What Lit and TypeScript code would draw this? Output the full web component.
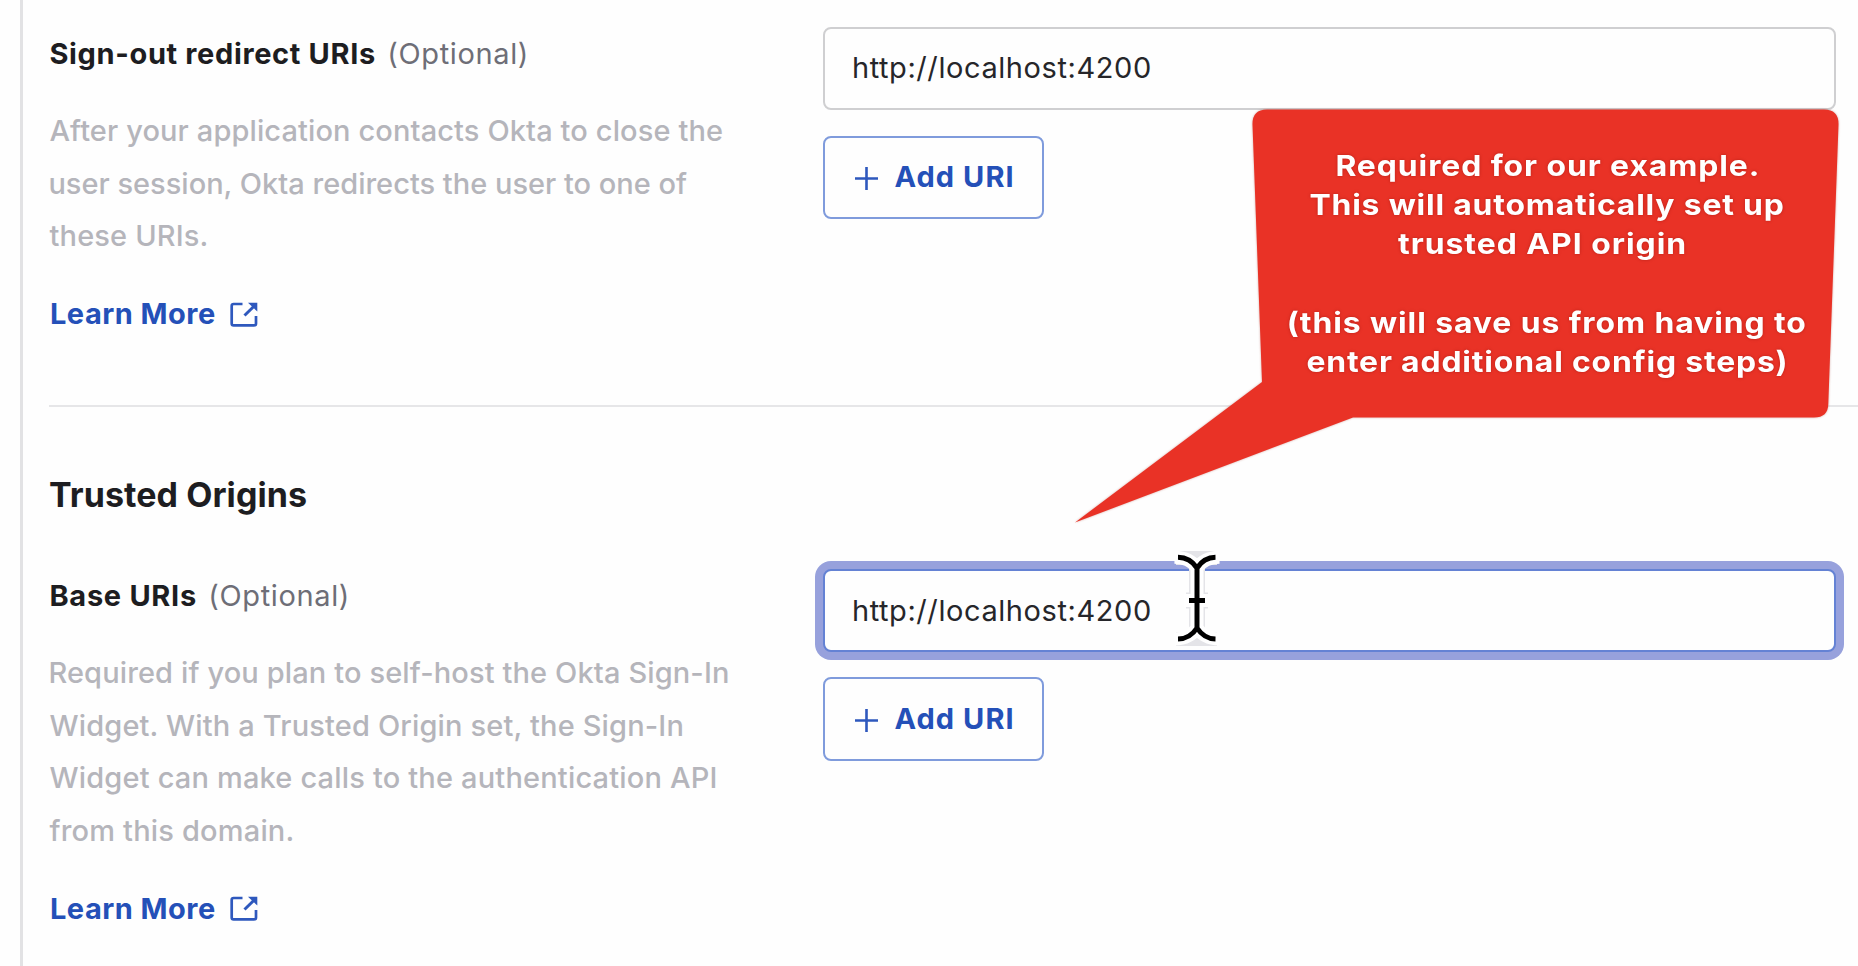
import { LitElement, html, css, svg, nothing } from "lit";

const canvas = document.createElement("canvas").getContext("2d")!;

/** One line of text whose tracking is derived from the width it has to span. */
class FitLine extends LitElement {
  static properties = {
    text: {}, width: { type: Number }, weight: { type: Number },
    size: { type: Number }, stretch: { type: Number },
  };
  declare text: string;
  declare width: number;
  declare weight: number;
  declare size: number;
  declare stretch: number;
  constructor() {
    super();
    this.text = ""; this.width = 0; this.weight = 400; this.size = 29; this.stretch = 1;
  }
  static styles = css`
    :host { display: block; flex: none; }
    .line { display: block; white-space: pre; font-family: Inter, "Liberation Sans", sans-serif; font-kerning: normal; transform-origin: 0 50%; }
  `;
  render() {
    canvas.font = `${this.weight} ${this.size}px Inter`;
    const m = canvas.measureText(this.text);
    const ink = m.actualBoundingBoxRight + m.actualBoundingBoxLeft;
    const space = (this.width / this.stretch - ink) / (this.text.length - 1);
    const style = `width:${this.width}px;font-size:${this.size}px;font-weight:${this.weight};letter-spacing:${space.toFixed(3)}px;`
      + `text-indent:${(m.actualBoundingBoxLeft * .55).toFixed(2)}px;`
      + (this.stretch !== 1 ? `transform:scaleX(${this.stretch})` : "");
    return html`<span class="line" style=${style}>${this.text}</span>`;
  }
}
customElements.define("fit-line", FitLine);

type Line = [string, number];
interface Field {
  id: string; heading?: Line; label: Line; lines: Line[]; value: string; focused: boolean;
}

const FIELDS: Field[] = [
  {
    id: "signout", label: ["Sign-out redirect URIs", 324.5], focused: false, value: "http://localhost:4200",
    lines: [
      ["After your application contacts Okta to close the", 672.5],
      ["user session, Okta redirects the user to one of", 637],
      ["these URIs.", 157],
    ],
  },
  {
    id: "origins", heading: ["Trusted Origins", 256], label: ["Base URIs", 145.5], focused: true, value: "http://localhost:4200",
    lines: [
      ["Required if you plan to self-host the Okta Sign-In", 677.5],
      ["Widget. With a Trusted Origin set, the Sign-In", 633.5],
      ["Widget can make calls to the authentication API", 666],
      ["from this domain.", 243],
    ],
  },
];

const NOTE: (Line | null)[] = [
  ["Required for our example.", 421],
  ["This will automatically set up", 473],
  ["trusted API origin", 287],
  null,
  ["(this will save us from having to", 516],
  ["enter additional config steps)", 478],
];

class AppRoot extends LitElement {
  static styles = css`
    :host { display: block; position: relative; width: 1858px; height: 966px; overflow: hidden; background: #fefefe; }
    * { box-sizing: border-box; }
    .page { height: 966px; margin-left: 20px; border-left: 3px solid #e2e2e4; padding-left: 26px; display: flex; flex-direction: column; }
    .section { display: grid; grid-template-columns: 773.5px 1013px; flex: none; }
    .signout { height: 405px; padding-top: 27px; }
    .rule { height: 2px; flex: none; background: #e6e6e8; }
    .heading { padding: 66px 0 0 .5px; height: 162px; line-height: 44px; color: #1d1d21; flex: none; }
    .copy { padding-left: .5px; }
    .signout .copy { padding-top: 7px; }
    .origins .copy { padding-top: 7px; }
    .label { display: flex; gap: 14.5px; line-height: 40px; color: #1d1d21; padding-left: .5px; }
    .optional { color: #6e6e77; }
    .desc { padding-top: 31px; line-height: 52.55px; color: #b5b5bb; }
    .learn { display: flex; align-items: center; gap: 15px; padding: 0 0 0 1px; margin-top: 31.5px; height: 40px; line-height: 40px; color: #2450b8; }
    .learn svg { display: block; }
    .box { display: flex; align-items: center; width: 1013px; height: 83px; padding-left: 28.5px; border: 2px solid #cfcfd1; border-radius: 8px; background: #fefefe; color: #26262a; line-height: 40px; }
    .signout .box { height: 82.5px; }
    .focused { border-color: #6482d4; box-shadow: 0 0 0 8px #97a1dc; }
    .add { display: flex; align-items: center; width: 221px; height: 83px; margin-top: 26px; padding: 0 0 0 29.5px; gap: 15.5px; background: #fefefe; border: 2px solid #7f9bdc; border-radius: 8px; color: #2450b8; line-height: 40px; }
    .origins .add { margin-top: 25px; height: 84px; }
    .add svg { position: relative; top: 1px; }
    .note { position: absolute; left: 1070px; top: 105px; width: 775px; height: 422px; filter: drop-shadow(0 0 1px rgba(140, 20, 10, .35)); }
    .notetext { position: absolute; left: 1272px; top: 146px; width: 548px; display: flex; flex-direction: column; align-items: center; line-height: 39.2px; color: #fff; text-shadow: 0 0 3px rgba(110, 10, 0, .4); }
    .note3 { margin-right: 10px; }
    .blank { height: 39.2px; }
    .cursor { position: absolute; left: 1164.5px; top: 545px; }
  `;

  private external() {
    return svg`<svg width="28" height="25" viewBox="0 0 28 25" fill="none" stroke="#2e58bd" stroke-width="2.7">
      <path d="M12.5 2H3.6Q1.7 2 1.7 4V21.4Q1.7 23.3 3.6 23.3H24Q26 23.3 26 21.4V14"/>
      <path d="M14.5 13.5L24 4.2" stroke-width="3"/>
      <path d="M18 .7H27.3V9.6Z" fill="#2e58bd" stroke="none"/>
    </svg>`;
  }

  private field(f: Field) {
    return html`
      ${f.heading ? html`<div class="heading"><fit-line .text=${f.heading[0]} .width=${f.heading[1]} .weight=${650} .size=${34}></fit-line></div>` : nothing}
      <div class="section ${f.id}">
        <div class="copy">
          <div class="label">
            <fit-line .text=${f.label[0]} .width=${f.label[1]} .weight=${700}></fit-line>
            <fit-line class="optional" .text=${"(Optional)"} .width=${135.5}></fit-line>
          </div>
          <div class="desc">${f.lines.map(([t, w]) => html`<fit-line .text=${t} .width=${w} .weight=${470}></fit-line>`)}</div>
          <div class="learn"><fit-line .text=${"Learn More"} .width=${164} .weight=${700}></fit-line>${this.external()}</div>
        </div>
        <div>
          <div class="box ${f.focused ? "focused" : ""}"><fit-line .text=${f.value} .width=${296} .weight=${430}></fit-line></div>
          <div class="add">
            <svg width="25" height="25" viewBox="0 0 25 25" stroke="#2e58bd" stroke-width="2.6"><path d="M1 12.5H24M12.5 1V24"/></svg>
            <fit-line .text=${"Add URI"} .width=${118} .weight=${700}></fit-line>
          </div>
        </div>
      </div>`;
  }

  render() {
    return html`
      <div class="page">
        ${this.field(FIELDS[0])}
        <div class="rule"></div>
        ${this.field(FIELDS[1])}
      </div>
      <svg class="note" viewBox="1070 105 775 422">
        <path fill="#e93226" d="M1267 109.5H1824Q1839 109.5 1838.5 125L1828.3 404Q1828 417.5 1814 417.5H1353L1075 522.5L1262 382L1252.5 125Q1252 109.5 1267 109.5Z"/>
      </svg>
      <div class="notetext">${NOTE.map((l, i) => l
        ? html`<fit-line class="note${i + 1}" .text=${l[0]} .width=${l[1]} .weight=${650} .stretch=${1.1}></fit-line>`
        : html`<div class="blank"></div>`)}</div>
      <svg class="cursor" width="64" height="108" viewBox="1165 545 64 108" fill="none">
        <g stroke="#e4e4e8" stroke-width="16"><path d="M1176 558H1217M1176 639H1217" stroke-width="14"/><path d="M1197 552V646M1186 600.5H1208"/></g>
        <g stroke="#fff" stroke-width="13"><path d="M1174.500 557.3Q1190 557.5 1197 568Q1204 557.5 1219.500 557.3M1174.500 639Q1190 638.8 1197 628Q1204 638.8 1219.500 639M1197 566V630M1184 600.5H1210"/></g>
        <g stroke="#000" stroke-width="5"><path d="M1178 557.3Q1190 557.5 1197 568Q1204 557.5 1215.500 557.3M1178 639Q1190 638.8 1197 628Q1204 638.8 1215.500 639M1197 566V630M1189 600.5H1205"/></g>
      </svg>`;
  }
}
customElements.define("app-root", AppRoot);
